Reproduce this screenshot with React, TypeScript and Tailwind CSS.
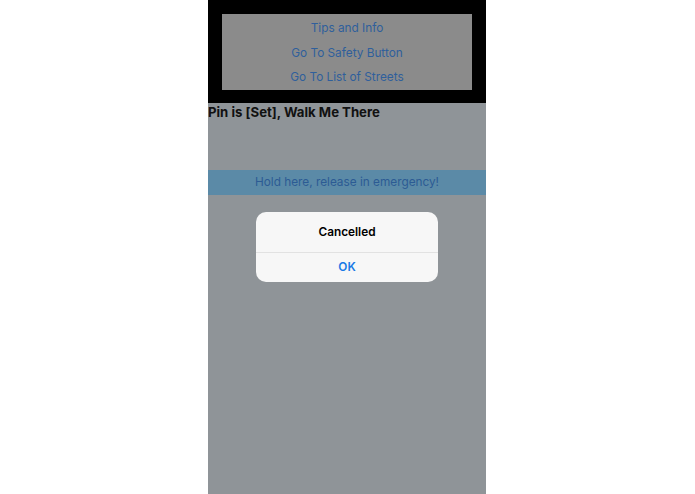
export default function App() {
  const links = ["Tips and Info", "Go To Safety Button", "Go To List of Streets"];

  return (
    <div
      className="flex h-[494px] w-full bg-white pl-[208px]"
      style={{ fontFamily: "Inter, 'Noto Sans', sans-serif" }}
    >
      <div className="relative flex h-full w-[278px] flex-col bg-[#8f9498]">
        <div className="bg-black px-[14px] pb-[13px] pt-[14px]">
          <div className="flex h-[76px] flex-col items-center justify-center bg-[#8b8b8b] pt-[3px]">
            {links.map((l) => (
              <div key={l} className="flex h-[25px] items-center text-[11.8px] text-[#2f5f9c]">
                {l}
              </div>
            ))}
          </div>
        </div>

        <div className="text-[13.2px] font-bold leading-[18px] text-[#111]">
          Pin is [Set], Walk Me There
        </div>

        <div className="mt-[49px] flex h-[25px] items-center justify-center bg-[#5b8aa7] text-[11.8px] text-[#2c5b94]">
          Hold here, release in emergency!
        </div>

        <div className="absolute left-[48px] top-[212px] w-[182px] overflow-hidden rounded-[10px] bg-[#f7f7f7]">
          <div className="flex h-[40px] items-center justify-center pt-[1px] text-[11.8px] font-semibold text-black">
            Cancelled
          </div>
          <div className="h-px bg-[#e2e2e2]" />
          <div className="flex h-[29px] items-center justify-center pt-[1px] text-[11.8px] font-semibold text-[#1a7ae6]">
            OK
          </div>
        </div>
      </div>
    </div>
  );
}
